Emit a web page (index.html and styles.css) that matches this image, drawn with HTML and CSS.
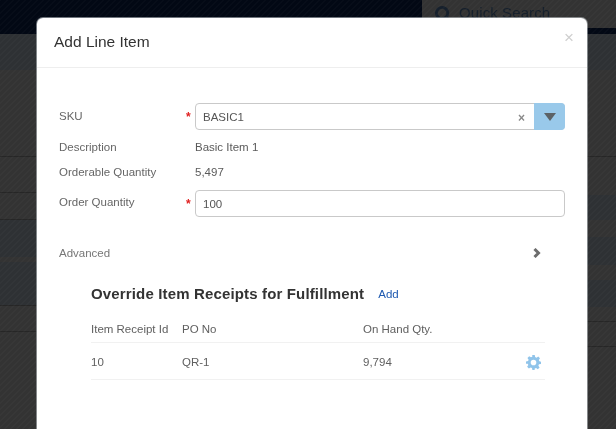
FILE: index.html
```html
<!DOCTYPE html>
<html lang="en">
<head>
<meta charset="utf-8">
<title>Add Line Item</title>
<link rel="stylesheet" href="styles.css">
</head>
<body>
<div class="page">
  <header class="topbar">
    <div class="search">
      <svg class="search-icon" viewBox="0 0 20 20" width="19" height="19"><circle cx="8.500" cy="8.500" r="6" fill="none" stroke="currentColor" stroke-width="3"/><path d="M13 13l5 5" stroke="currentColor" stroke-width="3.400" stroke-linecap="round"/></svg>
      <span class="search-text">Quick Search</span>
    </div>
  </header>
  <div class="backdrop">
    <div class="backdrop-col">
      <div class="band slate h36"></div>
      <div class="band h87 line"></div>
      <div class="band h36 line"></div>
      <div class="band h27 line"></div>
      <div class="band slate h37"></div>
      <div class="band h5"></div>
      <div class="band slate h44 line"></div>
      <div class="band h26 line"></div>
    </div>
    <div class="backdrop-col">
      <div class="band slate h36"></div>
      <div class="band h87 line"></div>
      <div class="band h38"></div>
      <div class="band slate h25"></div>
      <div class="band h17"></div>
      <div class="band slate h28"></div>
      <div class="band h15"></div>
      <div class="band slate h27"></div>
      <div class="band h15 line"></div>
      <div class="band h25 line"></div>
    </div>
  </div>

  <section class="modal">
    <div class="modal-header">
      <h1 class="modal-title">Add Line Item</h1>
      <span class="modal-close">×</span>
    </div>
    <div class="modal-body">
      <div class="form">
        <div class="form-row row-sku">
          <span class="label label-sku">SKU</span>
          <span class="req">*</span>
          <div class="combo">
            <span class="field-text">BASIC1</span>
            <span class="combo-clear">×</span>
            <span class="combo-btn"><svg viewBox="0 0 12 8" width="12" height="8"><path d="M0 0h12L6 8z" fill="#5c6266"/></svg></span>
          </div>
        </div>
        <div class="form-row row-desc">
          <span class="label">Description</span>
          <span class="req"></span>
          <span class="value">Basic Item 1</span>
        </div>
        <div class="form-row row-qty">
          <span class="label">Orderable Quantity</span>
          <span class="req"></span>
          <span class="value">5,497</span>
        </div>
        <div class="form-row row-order">
          <span class="label label-order">Order Quantity</span>
          <span class="req">*</span>
          <div class="input"><span class="field-text">100</span></div>
        </div>
      </div>

      <div class="advanced">
        <span class="advanced-label">Advanced</span>
        <svg class="chevron" viewBox="0 0 8 10" width="8" height="10"><path d="M1.500 1l4 4-4 4" fill="none" stroke="#6d6d6d" stroke-width="3"/></svg>
      </div>

      <div class="override">
        <div class="override-head">
          <h2 class="override-title">Override Item Receipts for Fulfillment</h2>
          <a class="add-link">Add</a>
        </div>
        <div class="tbl tbl-head">
          <span>Item Receipt Id</span><span>PO No</span><span>On Hand Qty.</span><span></span>
        </div>
        <div class="tbl tbl-row">
          <span>10</span><span>QR-1</span><span>9,794</span>
          <svg class="gear" viewBox="0 0 24 24" width="15" height="15"><path fill="#90c4ea" fill-rule="evenodd" d="M10 0h4l.6 3.300 2.200.9L19.600 2.300l2.800 2.800-1.900 2.800.9 2.200L24 10.700v3.600l-3.300.6-.9 2.200 1.900 2.800-2.800 2.800-2.800-1.900-2.200.9L13.800 24h-3.600l-.6-3.300-2.200-.9-2.800 1.900-2.800-2.800 1.900-2.800-.9-2.200L0 13.800v-3.600l3.300-.6.900-2.200-1.900-2.800 2.800-2.800 2.800 1.900 2.200-.9zM12 7.500a4.500 4.500 0 1 0 0 9 4.500 4.500 0 0 0 0-9z"/></svg>
        </div>
      </div>
    </div>
  </section>
</div>
</body>
</html>
```
FILE: styles.css
```css
* { box-sizing: border-box; }
html, body { margin: 0; padding: 0; height: 100%; }
body { overflow: hidden; font-family: "Liberation Sans", Arial, sans-serif; color: #555; }

.page {
  position: relative;
  width: 616px;
  height: 429px;
  overflow: hidden;
  background: #333333;
  filter: blur(0.3px);
}

.page::after {
  content: "";
  position: absolute;
  inset: 0;
  z-index: 1;
  pointer-events: none;
  background: repeating-linear-gradient(135deg, rgba(255,255,255,0.018) 0 1.414px, rgba(0,0,0,0) 1.414px 4.243px);
}

.topbar { display: flex; height: 34px; background: #020814; justify-content: flex-end; align-items: flex-start; }
.search { width: 194px; height: 28px; background: #333333; display: flex; align-items: flex-start; padding: 3px 0 0 12px; gap: 6px; color: #16202c; }
.search-icon { margin-top: 2px; }
.search-text { font-size: 15px; line-height: 20px; letter-spacing: 0.1px; }

.backdrop { display: flex; }
.backdrop-col { flex: 1; display: flex; flex-direction: column; }
.band { background: #333333; }
.slate { background: #2e3134; }
.line { border-bottom: 1px solid #262626; }
.h5 { height: 5px; }
.h15 { height: 15px; }
.h17 { height: 17px; }
.h25 { height: 25px; }
.h26 { height: 26px; }
.h27 { height: 27px; }
.h28 { height: 28px; }
.h36 { height: 36px; }
.h37 { height: 37px; }
.h38 { height: 38px; }
.h44 { height: 44px; }
.h87 { height: 87px; }

.modal {
  position: absolute;
  z-index: 2;
  left: 37px;
  top: 18px;
  width: 550px;
  height: 430px;
  background: #fff;
  border-radius: 6px 6px 0 0;
  box-shadow: 0 0 0 1px rgba(200,205,210,0.55);
}

.modal-header { position: relative; height: 50px; padding: 15px 17px 0; border-bottom: 1px solid #eeeeee; }
.modal-title { margin: 0; font-size: 15.500px; line-height: 18px; font-weight: 400; color: #333; }
.modal-close { position: absolute; right: 13px; top: 11px; font-size: 17px; line-height: 18px; color: #cfcfcf; }

.modal-body { padding: 35px 22px 0; }

.form { display: flex; flex-direction: column; }
.form-row { display: grid; grid-template-columns: 125px 11px 370px; align-items: center; font-size: 11.500px; }
.row-sku { height: 27px; }
.row-desc { height: 24px; margin-top: 5px; }
.row-qty { height: 24px; margin-top: 1px; }
.row-order { height: 27px; margin-top: 6px; }

.label { color: #666; line-height: 14px; }
.label-sku { margin-top: -2px; }
.label-order { margin-top: -3px; }
.req { color: #e02020; font-size: 12px; line-height: 12px; padding-left: 2px; font-weight: 700; }
.value { color: #5a5a5a; }

.combo, .input {
  display: flex;
  align-items: center;
  height: 27px;
  border: 1px solid #c9c9c9;
  border-radius: 4px;
  background: #fff;
  padding-left: 7px;
}
.field-text { color: #555; flex: 1; font-size: 11.500px; }
.combo-clear { width: 16px; font-size: 12px; line-height: 12px; font-weight: 700; color: #8a8a8a; margin-top: 2px; }
.combo-btn {
  display: flex;
  align-items: center;
  justify-content: center;
  width: 31px;
  height: 27px;
  margin: -1px -1px -1px 0;
  background: #99c9ea;
  border-radius: 0 4px 4px 0;
}

.advanced { display: flex; align-items: center; justify-content: space-between; margin-top: 28px; height: 16px; padding-right: 23px; }
.advanced-label { font-size: 11.500px; color: #777; }
.chevron { margin-right: 1px; }

.override { margin: 20px 20px 0 32px; }
.override-head { display: flex; align-items: center; height: 24px; gap: 14px; }
.override-title { margin: 0; font-size: 15px; font-weight: 700; color: #333; letter-spacing: 0.15px; }
.add-link { font-size: 11.500px; color: #1f5ab0; margin-top: 2px; }

.tbl { display: grid; grid-template-columns: 91px 181px 1fr 20px; align-items: center; font-size: 11.500px; color: #5f5f5f; border-bottom: 1px solid #f1f1f1; }
.tbl-head { margin-top: 13px; height: 25px; padding-bottom: 3px; }
.tbl-row { height: 37px; padding-top: 2px; }
.gear { justify-self: end; margin-right: 4px; }
```
